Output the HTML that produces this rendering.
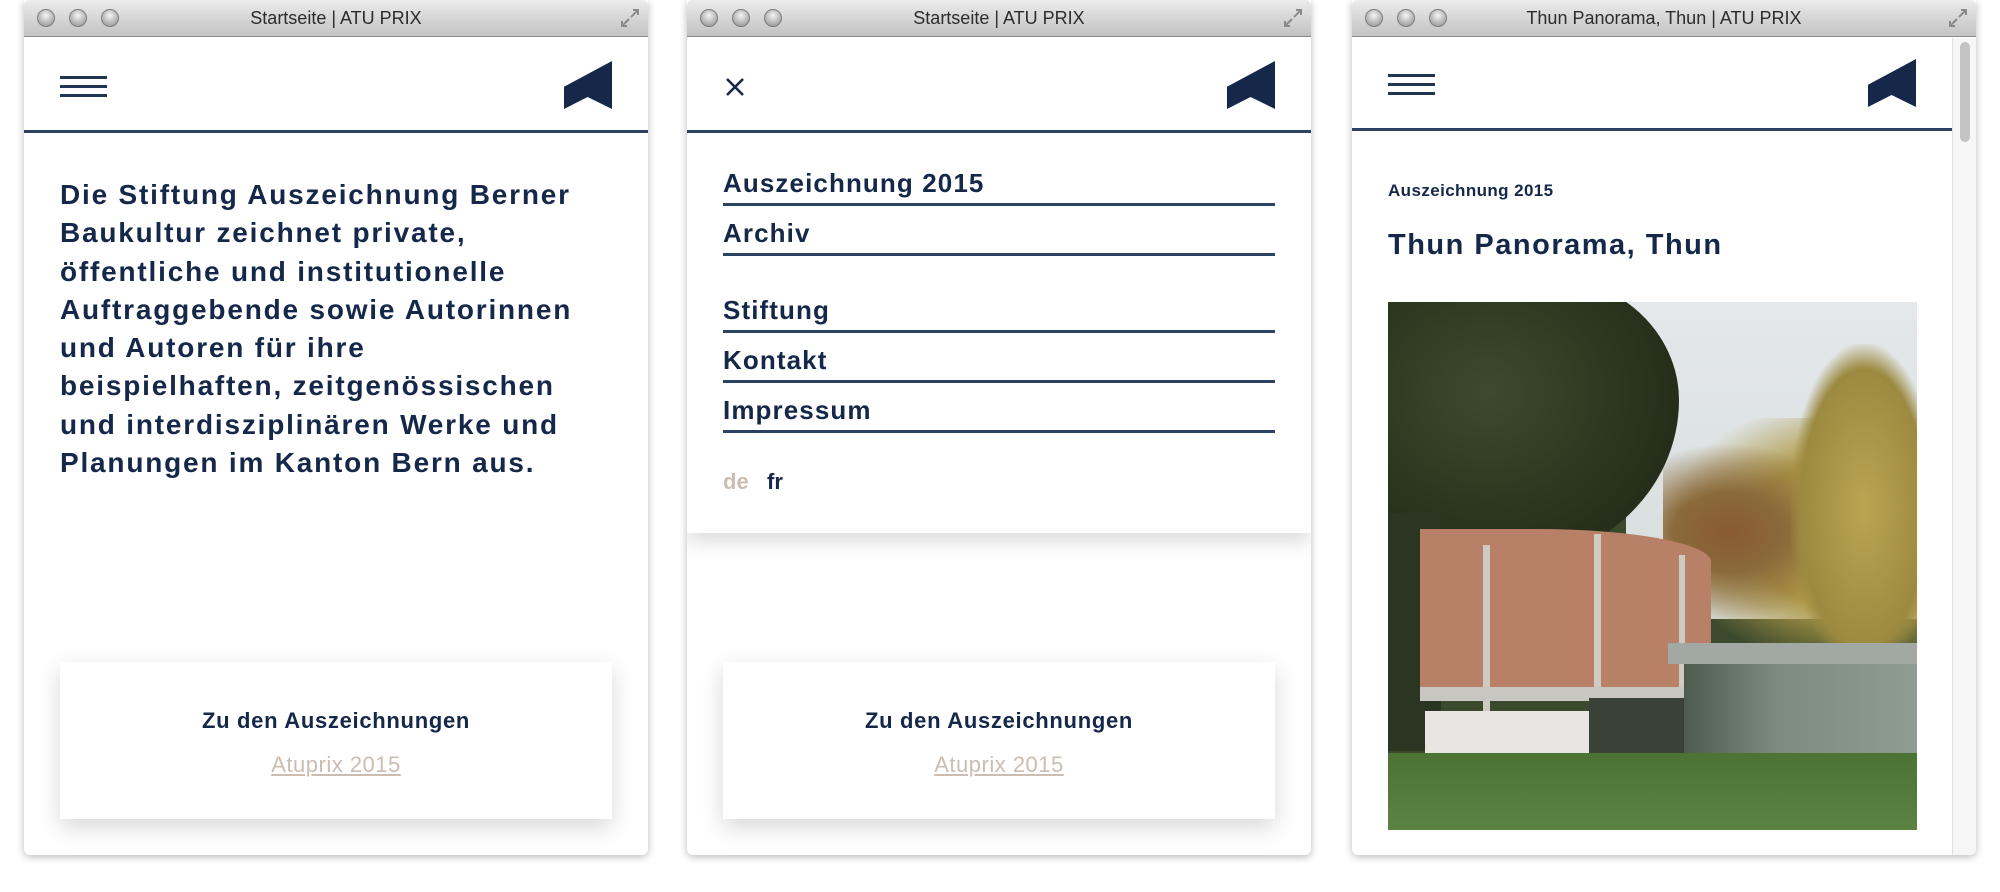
<!DOCTYPE html>
<html><head><meta charset="utf-8"><style>
*{margin:0;padding:0;box-sizing:border-box}
body{width:2000px;height:892px;background:#fff;position:relative;overflow:hidden;font-family:"Liberation Sans",sans-serif;color:#15284a}
.win{position:absolute;top:0;width:624px;height:855px;background:#fff;border-radius:0 0 6px 6px;box-shadow:0 2px 8px rgba(0,0,0,.28);overflow:hidden}
.tb{position:absolute;left:0;top:0;width:100%;height:37px;background:linear-gradient(#ececec,#d2d2d2 60%,#c4c4c4);border-bottom:1px solid #8a8a8a;border-radius:5px 5px 0 0}
.tb .t{position:absolute;left:0;right:0;top:8px;text-align:center;font-size:18px;color:#2c2c2c}
.dot{position:absolute;top:9px;width:18px;height:18px;border-radius:50%;background:radial-gradient(circle at 50% 35%,#f4f4f4,#a9a9a9 70%,#8c8c8c);border:1px solid #7c7c7c}
.rs{position:absolute;right:8px;top:8px;width:20px;height:20px}
.hdr{position:absolute;left:0;top:37px;width:100%;height:96px;border-bottom:3px solid #2c4262}
.ham{position:absolute;left:36px;top:39px;width:47px;height:21px}
.ham i{position:absolute;left:0;width:47px;height:3px;background:#1f3553}
.logo{position:absolute;right:36px;top:24px;width:48px;height:48px}
.main{position:absolute;left:36px;top:176px;font-size:28px;font-weight:bold;line-height:38.3px;white-space:nowrap;color:#15284a;letter-spacing:1.8px}
.card{position:absolute;left:36px;top:662px;width:552px;height:157px;background:#fff;box-shadow:0 8px 22px rgba(0,0,0,.16);text-align:center}
.card .a{position:absolute;left:0;right:0;top:46px;font-size:22px;font-weight:bold;letter-spacing:0.7px}
.card .b{position:absolute;left:0;right:0;top:90px;font-size:22px;color:#cbbdb1;text-decoration:underline;letter-spacing:0.5px}
.menu{position:absolute;left:0;top:37px;width:100%;height:496px;background:#fff;box-shadow:0 10px 18px rgba(0,0,0,.13)}
.mi{position:absolute;left:36px;width:552px;border-bottom:3px solid #2c4262;font-size:26px;font-weight:bold;height:38px;line-height:30px;letter-spacing:1.1px}
</style></head><body>

<div class="win" style="left:24px">
  <div class="tb"><span class="dot" style="left:13px"></span><span class="dot" style="left:45px"></span><span class="dot" style="left:77px"></span>
  <div class="t">Startseite | ATU PRIX</div>
  <svg class="rs" viewBox="0 0 20 20"><path d="M11 9 L18 2 M13 2 H18 V7 M9 11 L2 18 M2 13 V18 H7" stroke="#8a8a8a" stroke-width="2" fill="none"/></svg></div>
  <div class="hdr">
    <div class="ham"><i style="top:0"></i><i style="top:9px"></i><i style="top:18px"></i></div>
    <svg class="logo" viewBox="0 0 118 140" preserveAspectRatio="none"><polygon points="0,75 118,0 118,140 58,105 0,140" fill="#15284a"/></svg>
  </div>
  <div class="main">Die Stiftung Auszeichnung Berner<br>Baukultur zeichnet private,<br>öffentliche und institutionelle<br>Auftraggebende sowie Autorinnen<br>und Autoren für ihre<br>beispielhaften, zeitgenössischen<br>und interdisziplinären Werke und<br>Planungen im Kanton Bern aus.</div>
  <div class="card"><div class="a">Zu den Auszeichnungen</div><div class="b">Atuprix 2015</div></div>
</div>

<div class="win" style="left:687px">
  <div class="tb"><span class="dot" style="left:13px"></span><span class="dot" style="left:45px"></span><span class="dot" style="left:77px"></span>
  <div class="t">Startseite | ATU PRIX</div>
  <svg class="rs" viewBox="0 0 20 20"><path d="M11 9 L18 2 M13 2 H18 V7 M9 11 L2 18 M2 13 V18 H7" stroke="#8a8a8a" stroke-width="2" fill="none"/></svg></div>
  <div class="card"><div class="a">Zu den Auszeichnungen</div><div class="b">Atuprix 2015</div></div>
  <div class="menu">
    <div class="hdr" style="top:0">
      <svg style="position:absolute;left:38px;top:40px" width="20" height="20" viewBox="0 0 20 20"><path d="M2 2 L18 18 M18 2 L2 18" stroke="#15284a" stroke-width="2.6"/></svg>
      <svg class="logo" viewBox="0 0 118 140" preserveAspectRatio="none"><polygon points="0,75 118,0 118,140 58,105 0,140" fill="#15284a"/></svg>
    </div>
    <div class="mi" style="top:131px">Auszeichnung 2015</div>
    <div class="mi" style="top:181px">Archiv</div>
    <div class="mi" style="top:258px">Stiftung</div>
    <div class="mi" style="top:308px">Kontakt</div>
    <div class="mi" style="top:358px">Impressum</div>
    <div style="position:absolute;left:36px;top:432px;font-size:22px;font-weight:bold"><span style="color:#cbbdb1">de</span>&nbsp;&nbsp;&nbsp;fr</div>
  </div>
</div>

<div class="win" style="left:1352px">
  <div class="tb"><span class="dot" style="left:13px"></span><span class="dot" style="left:45px"></span><span class="dot" style="left:77px"></span>
  <div class="t">Thun Panorama, Thun | ATU PRIX</div>
  <svg class="rs" viewBox="0 0 20 20"><path d="M11 9 L18 2 M13 2 H18 V7 M9 11 L2 18 M2 13 V18 H7" stroke="#8a8a8a" stroke-width="2" fill="none"/></svg></div>
  <div class="hdr" style="width:600px;height:94px">
    <div class="ham" style="top:37px"><i style="top:0"></i><i style="top:9px"></i><i style="top:18px"></i></div>
    <svg class="logo" style="top:22px" viewBox="0 0 118 140" preserveAspectRatio="none"><polygon points="0,75 118,0 118,140 58,105 0,140" fill="#15284a"/></svg>
  </div>
  <div style="position:absolute;right:0;top:38px;width:24px;height:817px;background:#f6f6f6;border-left:1px solid #e2e2e2"><div style="position:absolute;left:7px;top:4px;width:10px;height:100px;border-radius:5px;background:#c4c4c4"></div></div>
  <div style="position:absolute;left:36px;top:181px;font-size:17px;font-weight:bold;letter-spacing:0.4px">Auszeichnung 2015</div>
  <div style="position:absolute;left:36px;top:229px;font-size:29px;font-weight:bold;letter-spacing:1.5px">Thun Panorama, Thun</div>
  <div style="position:absolute;left:36px;top:302px;width:529px;height:528px;overflow:hidden;background:#3b4a2c">
    <div style="position:absolute;left:45%;top:0;width:55%;height:60%;background:linear-gradient(#e4e8ea,#d6dcdc)"></div>
    <div style="position:absolute;left:52%;top:22%;width:50%;height:48%;background:radial-gradient(ellipse at 25% 45%,#8a5a34 0,#8a6a3a 20%,transparent 45%),radial-gradient(ellipse at 75% 45%,#c4ae58 0,#b09a48 40%,transparent 70%);"></div>
    <div style="position:absolute;left:76%;top:8%;width:28%;height:62%;background:radial-gradient(ellipse at 50% 50%,#bca452,#9c8a40 60%,transparent 72%)"></div>
    <div style="position:absolute;left:-5%;top:-5%;width:60%;height:55%;border-radius:30% 45% 60% 30%;background:radial-gradient(ellipse at 40% 40%,#3e4a2c,#252e1a 70%)"></div>
    <div style="position:absolute;left:0;top:40%;width:10%;height:45%;background:#2a3622"></div>
    <div style="position:absolute;left:6%;top:43%;width:55%;height:31%;border-radius:0 60% 0 0/0 20% 0 0;background:#b88067"></div>
    <div style="position:absolute;left:18%;top:46%;width:1.2%;height:39%;background:#cfcac2"></div>
    <div style="position:absolute;left:39%;top:44%;width:1.2%;height:31%;background:#cfcac2"></div>
    <div style="position:absolute;left:55%;top:48%;width:1.2%;height:25%;background:#cfcac2"></div>
    <div style="position:absolute;left:6%;top:73%;width:50%;height:2.5%;background:#c8c6c0"></div>
    <div style="position:absolute;left:7%;top:77.5%;width:32%;height:8%;background:#e8e6e2"></div>
    <div style="position:absolute;left:38%;top:75%;width:18%;height:11%;background:#3a4238"></div>
    <div style="position:absolute;left:53%;top:64.5%;width:47%;height:4%;background:#a2a8a4"></div>
    <div style="position:absolute;left:56%;top:68.5%;width:44%;height:21%;background:linear-gradient(90deg,#4e5c50,#7c8c80 40%,#8e9c92)"></div>
    <div style="position:absolute;left:0;top:85.5%;width:100%;height:15%;background:linear-gradient(#4c7334,#5c8444)"></div>
  </div>
</div>
</body></html>
